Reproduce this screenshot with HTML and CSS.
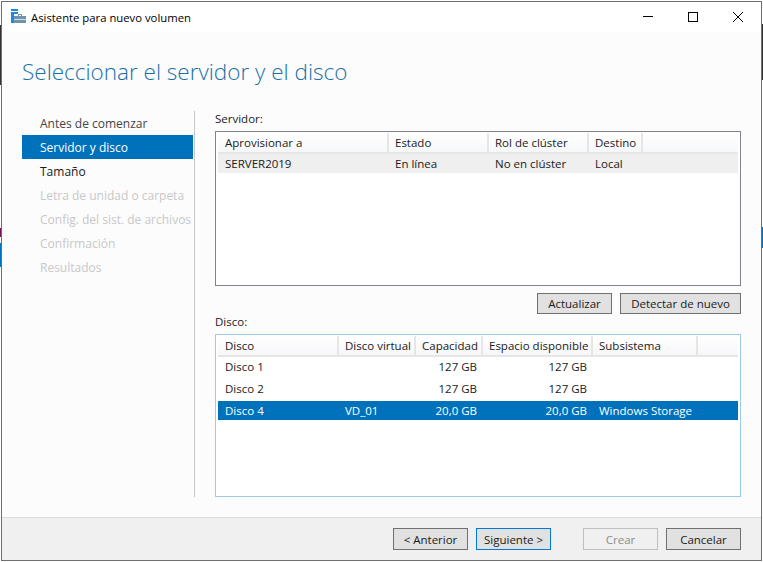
FILE: index.html
```html
<!DOCTYPE html>
<html lang="es">
<head>
    <meta charset="UTF-8">
    <title>Asistente para nuevo volumen</title>
    <link rel="stylesheet" href="styles.css">
</head>
<body>

<div class="window">
    <div class="titlebar">
        <svg class="app-icon" width="15" height="15" viewBox="0 0 15 15">
            <rect x="0" y="0" width="7" height="2" fill="#1e88e0"/>
            <rect x="0" y="3" width="7" height="2" fill="#1e88e0"/>
            <rect x="0" y="5" width="3" height="9" fill="#1e88e0"/>
            <rect x="3" y="7" width="12" height="7" fill="#6f93ad"/>
            <rect x="3" y="10" width="12" height="1" fill="#d5dfe6"/>
            <rect x="7.5" y="5.5" width="3" height="2" fill="none" stroke="#6f93ad"/>
        </svg>
        <span class="title">Asistente para nuevo volumen</span>
        <div class="controls">
            <svg width="12" height="12" viewBox="0 0 12 12"><path d="M1 5.5H11" stroke="#000" fill="none"/></svg>
            <svg width="12" height="12" viewBox="0 0 12 12"><rect x="1.5" y="1.5" width="9" height="9" stroke="#000" fill="none"/></svg>
            <svg width="12" height="12" viewBox="0 0 12 12"><path d="M1 1L11 11M11 1L1 11" stroke="#000" fill="none"/></svg>
        </div>
    </div>

    <div class="content">
        <h1>Seleccionar el servidor y el disco</h1>
        <div class="columns">
            <ul class="steps">
                <li>Antes de comenzar</li>
                <li class="active">Servidor y disco</li>
                <li class="current">Tamaño</li>
                <li class="disabled">Letra de unidad o carpeta</li>
                <li class="disabled">Config. del sist. de archivos</li>
                <li class="disabled">Confirmación</li>
                <li class="disabled">Resultados</li>
            </ul>
            <div class="panel">
                <div class="label">Servidor:</div>
                <div class="list server-list">
                    <div class="row head">
                        <span>Aprovisionar a</span>
                        <span>Estado</span>
                        <span>Rol de clúster</span>
                        <span>Destino</span>
                        <span></span>
                    </div>
                    <div class="row item hover">
                        <span>SERVER2019</span>
                        <span>En línea</span>
                        <span>No en clúster</span>
                        <span>Local</span>
                        <span></span>
                    </div>
                </div>
                <div class="list-buttons">
                    <button>Actualizar</button>
                    <button class="wide">Detectar de nuevo</button>
                </div>
                <div class="label disk-label">Disco:</div>
                <div class="list disk-list">
                    <div class="row head">
                        <span>Disco</span>
                        <span>Disco virtual</span>
                        <span>Capacidad</span>
                        <span>Espacio disponible</span>
                        <span>Subsistema</span>
                        <span></span>
                    </div>
                    <div class="row item">
                        <span>Disco 1</span>
                        <span></span>
                        <span class="num">127 GB</span>
                        <span class="num">127 GB</span>
                        <span></span>
                        <span></span>
                    </div>
                    <div class="row item">
                        <span>Disco 2</span>
                        <span></span>
                        <span class="num">127 GB</span>
                        <span class="num">127 GB</span>
                        <span></span>
                        <span></span>
                    </div>
                    <div class="row item selected">
                        <span>Disco 4</span>
                        <span>VD_01</span>
                        <span class="num">20,0 GB</span>
                        <span class="num">20,0 GB</span>
                        <span>Windows Storage</span>
                        <span></span>
                    </div>
                </div>
            </div>
        </div>
    </div>

    <div class="footer">
        <button>&lt; Anterior</button>
        <button class="primary">Siguiente &gt;</button>
        <button class="off" disabled>Crear</button>
        <button>Cancelar</button>
    </div>
</div>

</body>
</html>
```

FILE: styles.css
```css
html, body {
    margin: 0;
    height: 100%;
    overflow: hidden;
}
body {
    background-color: #fff;
    /* bits of the desktop showing past the window edge */
    background-image:
        linear-gradient(#333, #333),
        linear-gradient(#7a1050, #7a1050),
        linear-gradient(#0072bc, #0072bc),
        linear-gradient(#333, #333),
        linear-gradient(#0072bc, #0072bc);
    background-repeat: no-repeat;
    background-size: 1px 60px, 1px 9px, 1px 24px, 1px 56px, 1px 21px;
    background-position: 0 25px, 0 228px, 0 243px, 762px 24px, 762px 227px;
    font-family: "Open Sans", "Noto Sans", sans-serif;
    font-size: 11.5px;
    color: #1a1a1a;
    padding: 1px;
    box-sizing: border-box;
}
.window {
    width: 761px;
    height: 560px;
    box-sizing: border-box;
    border: 1px solid #6f6f6f;
    background-color: #fcfcfc;
    display: flex;
    flex-direction: column;
}
.titlebar {
    height: 30px;
    background-color: #fff;
    display: flex;
    align-items: center;
    padding-left: 9px;
    flex-shrink: 0;
}
.app-icon {
    margin-right: 5px;
    margin-bottom: 2px;
}
.title {
    color: #000;
    font-size: 11.3px;
}
.controls {
    margin-left: auto;
    display: flex;
    gap: 33px;
    padding-right: 17px;
    padding-bottom: 1px;
}
.content {
    flex: 1;
    padding: 0 20px;
}
h1 {
    margin: 0;
    height: 79px;
    line-height: 79px;
    font-size: 22.5px;
    font-weight: 300;
    color: #1a6fa8;
}
.columns {
    display: flex;
}
.steps {
    list-style: none;
    margin: 0;
    padding: 0;
    width: 171px;
    height: 386px;
    margin-right: 1px;
    font-size: 12px;
}
.steps li {
    height: 24px;
    line-height: 26px;
    padding-left: 18px;
    color: #444;
}
.steps li.active {
    background-color: #0072bc;
    color: #fff;
}
.steps li.current {
    color: #1a1a1a;
}
.steps li.disabled {
    color: #c8c8c8;
}
.panel {
    border-left: 1px solid #c8c8c8;
    padding-left: 20px;
    width: 526px;
}
.label {
    height: 20px;
    line-height: 16px;
}
.list {
    border: 1px solid #82828f;
    background-color: #fff;
    box-sizing: border-box;
    padding: 1px 2px;
}
.server-list {
    height: 155px;
}
.disk-list {
    height: 163px;
    border-color: #9ccbe8;
}
.row {
    display: grid;
    align-items: center;
    width: 520px;
    box-sizing: border-box;
}
.server-list .row {
    grid-template-columns: 171px 100px 100px 54px 95px;
}
.disk-list .row {
    grid-template-columns: 121px 77px 67px 110px 105px 40px;
}
.row span {
    padding: 0 6px;
    white-space: nowrap;
    overflow: hidden;
}
.row span:first-child {
    padding-left: 7px;
}
.head {
    height: 21px;
    border-bottom: 2px solid #e6e6e6;
    background-image: linear-gradient(#fff, #f6f7f9);
}
.head span {
    height: 19px;
    line-height: 19px;
    border-right: 2px solid #e6e6e6;
    box-sizing: border-box;
}
.head span:last-child {
    border-right: none;
}
.item {
    height: 19px;
    margin-bottom: 3px;
}
.item.hover {
    background-color: #efefef;
}
.item.selected {
    background-color: #0072bc;
    color: #fff;
}
.num {
    text-align: right;
}
.list-buttons {
    display: flex;
    justify-content: flex-end;
    gap: 8px;
    height: 29px;
    box-sizing: border-box;
    padding-top: 7px;
}
.disk-label {
    height: 19px;
    line-height: 14px;
}
button {
    width: 75px;
    height: 21px;
    box-sizing: border-box;
    padding: 0;
    border: 1px solid #707070;
    background-color: #e1e1e1;
    font-family: "Open Sans", "Noto Sans", sans-serif;
    font-size: 11.5px;
    color: #1a1a1a;
}
button.wide {
    width: 121px;
}
.footer {
    height: 43px;
    box-sizing: border-box;
    flex-shrink: 0;
    border-top: 1px solid #dcdcdc;
    background-color: #f0f0f0;
    display: flex;
    justify-content: flex-end;
    align-items: center;
    padding-right: 20px;
    gap: 8px;
}
.footer button {
    height: 22px;
}
.footer button.primary {
    border-color: #0078d7;
    margin-right: 24px;
}
.footer button.off {
    border-color: #bfbfbf;
    background-color: #f0f0f0;
    color: #8c8c8c;
}
```
